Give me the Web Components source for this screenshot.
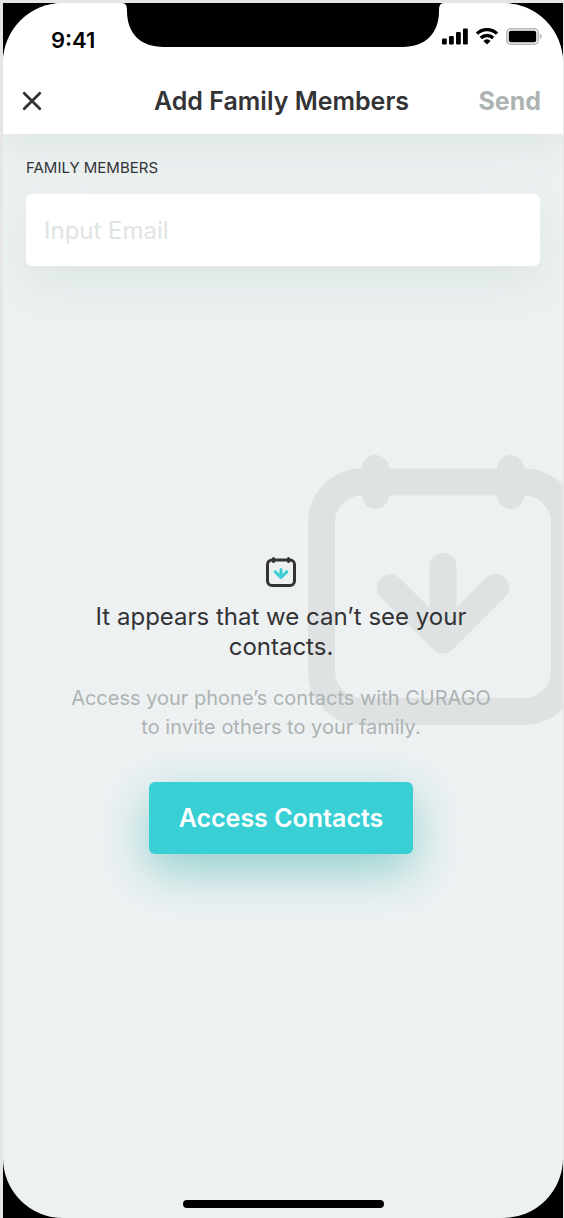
<!DOCTYPE html>
<html lang="en">
<head>
  <meta charset="utf-8">
  <meta name="viewport" content="width=device-width, initial-scale=1">
  <title>Add Family Members</title>
  <style>
    :root {
      --ink: #333336;
      --muted: #adb3b3;
      --accent: #38cfd5;
      --surface: #edf1f2;
      --shadow: #dbe5e3;
    }

    body {
      margin: 0;
      padding: 3px 1px 0 3px;
      background: #e6e6e6;
      color: var(--ink);
      font-family: Inter, "Liberation Sans", sans-serif;
    }
  </style>
</head>
<body>
  <phone-screen-component>
    <status-bar-component slot="header" time="9:41"></status-bar-component>
    <nav-bar-component slot="header" action="Send">Add Family Members</nav-bar-component>
    <email-field-component label="Family Members" placeholder="Input Email"></email-field-component>
    <empty-state-component>
      <span slot="title">It appears that we can’t see your contacts.</span>
      <span slot="text">Access your phone’s contacts with CURAGO to invite others to your family.</span>
      <primary-button-component slot="action">Access Contacts</primary-button-component>
    </empty-state-component>
  </phone-screen-component>

  <script>
    class PhoneScreen extends HTMLElement {
      constructor () {
        super()
        this.shadow = this.attachShadow({ mode: 'open' })
      }

      connectedCallback () {
        this.render()
      }

      render () {
        this.shadow.innerHTML =
          /*html*/`
          <style>
            :host {
              display: block;
              background: #000;
            }

            .screen {
              display: flex;
              flex-direction: column;
              min-height: calc(100vh - 3px);
              overflow: hidden;
              border-radius: 60px;
              background: var(--surface);
            }

            header {
              background: #fff;
              box-shadow: 0 12px 40px var(--shadow);
            }

            main {
              display: flex;
              flex: 1;
              flex-direction: column;
            }

            .home-indicator {
              align-self: center;
              width: 201px;
              height: 8px;
              margin-bottom: 10px;
              border-radius: 4px;
              background: #000;
            }
          </style>

          <div class="screen">
            <header><slot name="header"></slot></header>
            <main><slot></slot></main>
            <div class="home-indicator"></div>
          </div>`
      }
    }

    customElements.define('phone-screen-component', PhoneScreen)

    class StatusBar extends HTMLElement {
      constructor () {
        super()
        this.shadow = this.attachShadow({ mode: 'open' })
      }

      connectedCallback () {
        this.render()
      }

      render () {
        this.shadow.innerHTML =
          /*html*/`
          <style>
            :host {
              position: relative;
              display: flex;
              align-items: flex-start;
              justify-content: space-between;
              box-sizing: border-box;
              height: 65px;
              padding: 25px 21px 0 48px;
              color: #000;
            }

            svg {
              display: block;
            }

            .notch {
              position: absolute;
              top: 0;
              left: 50%;
              transform: translateX(-50%);
            }

            .time {
              font-size: 22px;
              font-weight: 600;
              line-height: 24px;
            }

            .icons {
              position: relative;
              display: flex;
              gap: 8px;
            }
          </style>

          <svg class="notch" width="322" height="44" viewBox="0 0 322 44">
            <path d="M0 0C4 0 5 3 5 8C5 30 18 44 42 44H280C304 44 317 30 317 8C317 3 318 0 322 0Z"/>
          </svg>
          <span class="time">${this.getAttribute('time')}</span>
          <div class="icons">
            <svg width="26" height="17" viewBox="0 0 26 17">
              <rect x="0" y="10.5" width="4.8" height="6" rx="1.2"/>
              <rect x="7" y="8" width="4.8" height="8.5" rx="1.2"/>
              <rect x="14" y="4" width="4.8" height="12.5" rx="1.2"/>
              <rect x="21" y="0.4" width="4.8" height="16.1" rx="1.2"/>
            </svg>
            <svg width="22" height="17" viewBox="0 0 22 17">
              <g fill="none" stroke="#000" stroke-width="3.3">
                <path d="M1 5.7A14.2 14.2 0 0 1 21 5.7"/>
                <path d="M4.8 10A8.9 8.9 0 0 1 17.2 10"/>
              </g>
              <path d="M11 16.4L7.4 12.9A5 5 0 0 1 14.6 12.9Z"/>
            </svg>
            <svg width="36" height="17" viewBox="0 0 36 17">
              <rect x="0.8" y="0.8" width="31.4" height="15.4" rx="4" fill="none" stroke="#b1b6b6" stroke-width="1.5"/>
              <rect x="2.8" y="2.8" width="27.4" height="11.4" rx="2"/>
              <path d="M33.8 5.5V11.5C36.2 10.6 36.2 6.4 33.8 5.5Z" fill="#b1b6b6"/>
            </svg>
          </div>`
      }
    }

    customElements.define('status-bar-component', StatusBar)

    class NavBar extends HTMLElement {
      constructor () {
        super()
        this.shadow = this.attachShadow({ mode: 'open' })
      }

      connectedCallback () {
        this.render()
      }

      render () {
        this.shadow.innerHTML =
          /*html*/`
          <style>
            :host {
              display: grid;
              grid-template-columns: 1fr auto 1fr;
              align-items: center;
              height: 66px;
              padding: 0 22px 0 19px;
            }

            button {
              padding: 0;
              border: 0;
              background: none;
              color: inherit;
              font: inherit;
              cursor: pointer;
            }

            svg {
              display: block;
            }

            h1 {
              margin: 0;
              font-size: 25px;
              font-weight: 600;
              line-height: 30px;
            }

            .close {
              justify-self: start;
            }

            .action {
              justify-self: end;
              color: var(--muted);
              font-size: 25px;
              font-weight: 700;
              line-height: 30px;
            }
          </style>

          <button class="close" type="button" aria-label="Close">
            <svg width="20" height="20" viewBox="0 0 20 20" fill="none" stroke="currentColor" stroke-width="2.8" stroke-linecap="round">
              <path d="M2.2 2.2L17.8 17.8M17.8 2.2L2.2 17.8"/>
            </svg>
          </button>
          <h1><slot></slot></h1>
          <button class="action" type="button">${this.getAttribute('action')}</button>`
      }
    }

    customElements.define('nav-bar-component', NavBar)

    class EmailField extends HTMLElement {
      constructor () {
        super()
        this.shadow = this.attachShadow({ mode: 'open' })
      }

      connectedCallback () {
        this.render()
      }

      render () {
        this.shadow.innerHTML =
          /*html*/`
          <style>
            :host {
              display: block;
              padding: 24px 23px 0;
            }

            label {
              display: block;
              margin-bottom: 16px;
              font-size: 15px;
              line-height: 20px;
              text-transform: uppercase;
            }

            input {
              display: block;
              box-sizing: border-box;
              width: 100%;
              height: 72px;
              padding: 0 18px;
              border: 0;
              border-radius: 6px;
              background: #fff;
              box-shadow: 0 16px 48px var(--shadow);
              color: inherit;
              font: inherit;
              font-size: 24px;
            }

            input::placeholder {
              color: #dfe4e4;
              opacity: 1;
            }
          </style>

          <label for="email">${this.getAttribute('label')}</label>
          <input id="email" type="email" placeholder="${this.getAttribute('placeholder')}">`
      }
    }

    customElements.define('email-field-component', EmailField)

    class CalendarIcon extends HTMLElement {
      constructor () {
        super()
        this.shadow = this.attachShadow({ mode: 'open' })
      }

      connectedCallback () {
        this.render()
      }

      render () {
        this.shadow.innerHTML =
          /*html*/`
          <style>
            :host {
              display: block;
              width: 30px;
              height: 30px;
            }

            svg {
              display: block;
              width: 100%;
              height: 100%;
            }

            .arrow {
              stroke: var(--arrow-color, currentColor);
            }
          </style>

          <svg viewBox="0 0 20 20" fill="none" stroke="currentColor" stroke-width="2" stroke-linecap="round" stroke-linejoin="round" aria-hidden="true">
            <rect x="1" y="2" width="18" height="17" rx="3"/>
            <path d="M5 1V3M15 1V3"/>
            <path class="arrow" d="M10 8.25V13.7M6.1 9.85L10 13.7L13.9 9.8"/>
          </svg>`
      }
    }

    customElements.define('calendar-icon-component', CalendarIcon)

    class EmptyState extends HTMLElement {
      constructor () {
        super()
        this.shadow = this.attachShadow({ mode: 'open' })
      }

      connectedCallback () {
        this.render()
      }

      render () {
        this.shadow.innerHTML =
          /*html*/`
          <style>
            :host {
              display: flex;
              flex: 1;
              flex-direction: column;
              justify-content: center;
              padding: 0 24px 55px 20px;
              text-align: center;
            }

            .content {
              position: relative;
              isolation: isolate;
              display: flex;
              flex-direction: column;
              align-items: center;
            }

            .icon {
              --arrow-color: var(--accent);
            }

            /* oversized copy of the icon, bleeds off the right edge */
            .watermark {
              position: absolute;
              z-index: -1;
              top: -102px;
              left: calc(50% + 27px);
              width: 270px;
              height: 270px;
              color: #dee2e2;
            }

            h2 {
              max-width: 420px;
              margin: 15px 0 0;
              font-size: 24px;
              font-weight: 400;
              line-height: 30px;
            }

            p {
              max-width: 440px;
              margin: 22px 0 40px;
              color: var(--muted);
              font-size: 20px;
              line-height: 29px;
            }
          </style>

          <div class="content">
            <calendar-icon-component class="watermark"></calendar-icon-component>
            <calendar-icon-component class="icon"></calendar-icon-component>
            <h2><slot name="title"></slot></h2>
            <p><slot name="text"></slot></p>
            <slot name="action"></slot>
          </div>`
      }
    }

    customElements.define('empty-state-component', EmptyState)

    class PrimaryButton extends HTMLElement {
      constructor () {
        super()
        this.shadow = this.attachShadow({ mode: 'open' })
      }

      connectedCallback () {
        this.render()
      }

      render () {
        this.shadow.innerHTML =
          /*html*/`
          <style>
            :host {
              display: block;
            }

            button {
              display: block;
              min-width: 264px;
              height: 72px;
              padding: 0 24px;
              border: 0;
              border-radius: 6px;
              background: var(--accent);
              box-shadow: 0 16px 48px #8fcfcd;
              color: #fff;
              font: inherit;
              font-size: 25px;
              font-weight: 600;
              cursor: pointer;
            }
          </style>

          <button type="button"><slot></slot></button>`
      }
    }

    customElements.define('primary-button-component', PrimaryButton)
  </script>
</body>
</html>
